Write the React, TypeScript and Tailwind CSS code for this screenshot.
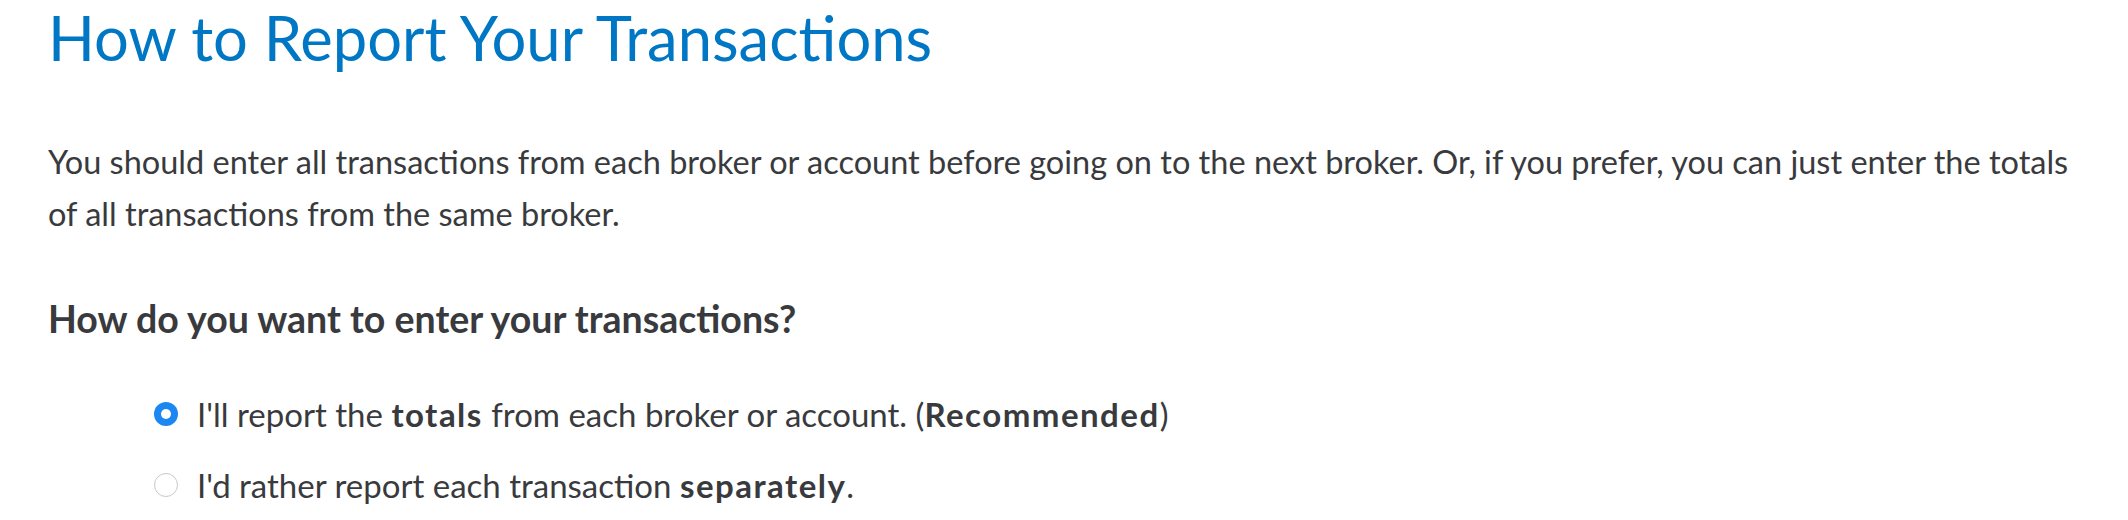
export default function App() {
  return (
    <div className="min-h-[520px] w-[2128px] bg-white pl-[48px] pr-[50px] font-['Lato',sans-serif] text-[#393a3d]">
      <h1 className="text-[61.5px] leading-[74px] font-normal text-[#0077c5]">How to Report Your Transactions</h1>
      <p className="mt-[62px] text-[32.5px] leading-[52px]">
        You should enter all transactions from each broker or account before going on to the next broker. Or, if you prefer, you can just enter the totals of all transactions from the same broker.
      </p>
      <h2 className="mt-[57px] text-[37.5px] leading-[44px] font-bold">How do you want to enter your transactions?</h2>
      <div className="mt-[47px] flex flex-col gap-[19px] pl-[106px]">
        <label className="flex items-center gap-[19px] text-[33px] leading-[52px]">
          <span className="flex h-[24px] w-[24px] items-center justify-center rounded-full bg-[#1b87f0]">
            <span className="h-[10px] w-[10px] rounded-full bg-white" />
          </span>
          <span>
            I'll report the <b className="tracking-[0.045em]">totals</b> from each broker or account. (<b className="tracking-[0.045em]">Recommended</b>)
          </span>
        </label>
        <label className="flex items-center gap-[19px] text-[33px] leading-[52px]">
          <span className="h-[24px] w-[24px] rounded-full border border-[#c8c8c8] bg-white" />
          <span>
            I'd rather report each transaction <b className="tracking-[0.045em]">separately</b>.
          </span>
        </label>
      </div>
    </div>
  );
}
